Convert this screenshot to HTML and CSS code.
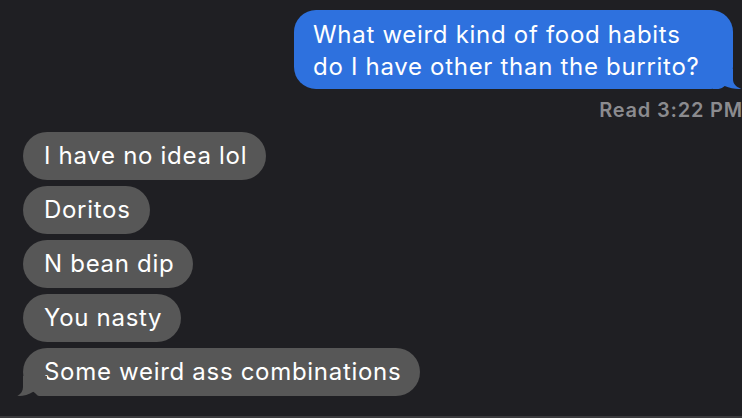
FILE: index.html
```html
<!DOCTYPE html>
<html>
<head>
<meta charset="utf-8">
<link rel="stylesheet" href="styles.css">
</head>
<body>
<div class="screen">
  <div class="chat">
    <div class="row-sent">
      <div class="bubble sent">What weird kind of food habits<br>do I have other than the burrito?
        <svg class="tail tail-sent" width="29" height="20" viewBox="0 0 29 20"><path d="M0 0 H20 V10 C20 15 23 18 28.5 19.8 C24 20.3 17 19.3 11.7 17 C10 18.6 8 19.6 5.5 20 L0 20 Z"/></svg>
      </div>
    </div>
    <div class="read">Read 3:22 PM</div>
    <div class="received">
      <div class="bubble recv">I have no idea lol</div>
      <div class="bubble recv">Doritos</div>
      <div class="bubble recv">N bean dip</div>
      <div class="bubble recv">You nasty</div>
      <div class="bubble recv">Some weird ass combinations
        <svg class="tail tail-recv" width="30" height="20" viewBox="0 0 30 20"><path d="M30 0 H6 V11 C6 15 4 18 0.3 19.8 C4 20.4 11 19.3 16.7 15.5 C18.5 17.6 20 19.5 22 20 H30 Z"/></svg>
      </div>
    </div>
  </div>
  <div class="footer"></div>
</div>
</body>
</html>
```
FILE: styles.css
```css
html, body {
  margin: 0;
  padding: 0;
  background: #1f1f23;
}
body {
  width: 742px;
  height: 418px;
  overflow: hidden;
  font-family: Inter, "Noto Sans", "Liberation Sans", sans-serif;
}
.screen {
  display: flex;
  flex-direction: column;
  height: 418px;
}
.chat {
  flex: 1;
  padding-top: 10px;
  overflow: hidden;
}
.footer {
  height: 2px;
  background: #3a3a3d;
}
.row-sent {
  display: flex;
  justify-content: flex-end;
  padding-right: 9px;
}
.bubble {
  position: relative;
  color: #ffffff;
  font-size: 24px;
  letter-spacing: 0.7px;
  box-sizing: border-box;
}
.sent {
  width: 439px;
  background: #2e71de;
  border-radius: 22px;
  padding: 9px 19px 7px 19px;
  line-height: 31.5px;
}
.tail {
  position: absolute;
  bottom: 0;
}
.tail-sent {
  right: -9px;
  fill: #2e71de;
}
.tail-recv {
  left: -6px;
  fill: #575757;
}
.read {
  margin-top: 9px;
  text-align: right;
  font-size: 20px;
  line-height: 24px;
  font-weight: 600;
  letter-spacing: 0.8px;
  color: #8b8b8f;
  margin-right: -1px;
}
.received {
  display: flex;
  flex-direction: column;
  align-items: flex-start;
  gap: 6px;
  padding-left: 23px;
  margin-top: 10px;
}
.recv {
  background: #575757;
  height: 48px;
  line-height: 48px;
  border-radius: 24px;
  padding: 0 19px 0 21px;
  white-space: nowrap;
}
```
